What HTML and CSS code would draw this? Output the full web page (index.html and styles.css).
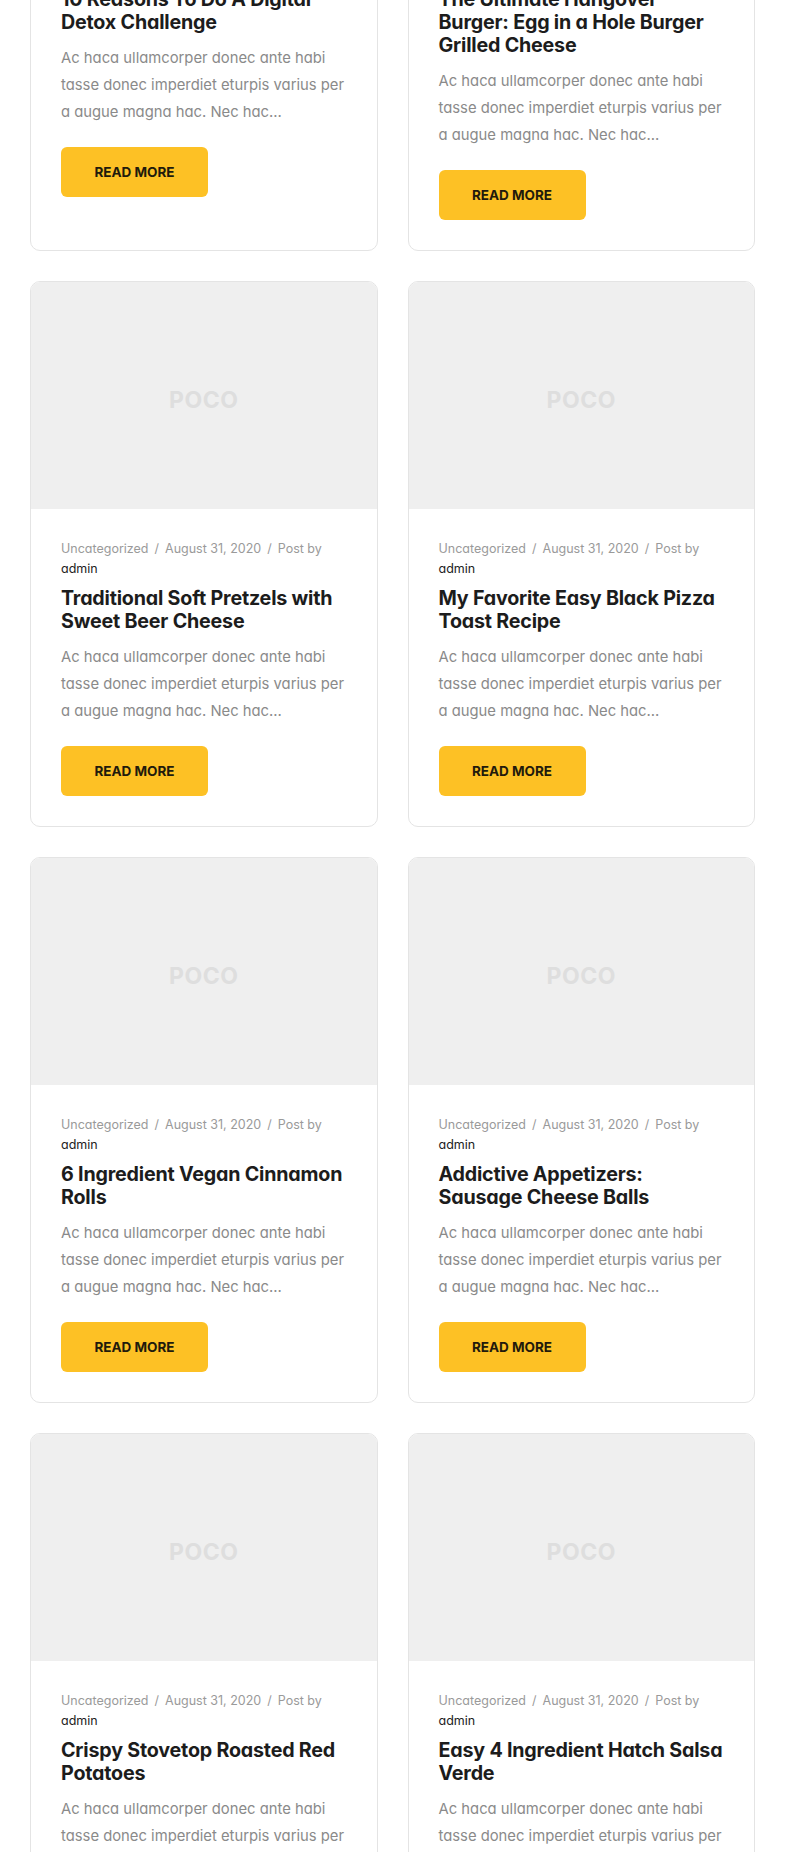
FILE: index.html
```html
<!DOCTYPE html>
<html lang="en">
<head>
<meta charset="utf-8">
<title>Blog</title>
<link rel="stylesheet" href="styles.css">
</head>
<body>
<main class="posts">
  <article class="card">
    <div class="thumb"><span class="logo">POCO</span></div>
    <div class="body">
      <div class="meta">Uncategorized<span class="sep">/</span>August 31, 2020<span class="sep">/</span>Post by <a class="author" href="#">admin</a></div>
      <h2 class="title">10 Reasons To Do A Digital Detox Challenge</h2>
      <p class="excerpt">Ac haca ullamcorper donec ante habi tasse donec imperdiet eturpis varius per a augue magna hac. Nec hac...</p>
      <a class="btn" href="#">READ MORE</a>
    </div>
  </article>
  <article class="card">
    <div class="thumb"><span class="logo">POCO</span></div>
    <div class="body">
      <div class="meta">Uncategorized<span class="sep">/</span>August 31, 2020<span class="sep">/</span>Post by <a class="author" href="#">admin</a></div>
      <h2 class="title">The Ultimate Hangover<br>Burger: Egg in a Hole Burger Grilled Cheese</h2>
      <p class="excerpt">Ac haca ullamcorper donec ante habi tasse donec imperdiet eturpis varius per a augue magna hac. Nec hac...</p>
      <a class="btn" href="#">READ MORE</a>
    </div>
  </article>
  <article class="card">
    <div class="thumb"><span class="logo">POCO</span></div>
    <div class="body">
      <div class="meta">Uncategorized<span class="sep">/</span>August 31, 2020<span class="sep">/</span>Post by <a class="author" href="#">admin</a></div>
      <h2 class="title">Traditional Soft Pretzels with Sweet Beer Cheese</h2>
      <p class="excerpt">Ac haca ullamcorper donec ante habi tasse donec imperdiet eturpis varius per a augue magna hac. Nec hac...</p>
      <a class="btn" href="#">READ MORE</a>
    </div>
  </article>
  <article class="card">
    <div class="thumb"><span class="logo">POCO</span></div>
    <div class="body">
      <div class="meta">Uncategorized<span class="sep">/</span>August 31, 2020<span class="sep">/</span>Post by <a class="author" href="#">admin</a></div>
      <h2 class="title">My Favorite Easy Black Pizza Toast Recipe</h2>
      <p class="excerpt">Ac haca ullamcorper donec ante habi tasse donec imperdiet eturpis varius per a augue magna hac. Nec hac...</p>
      <a class="btn" href="#">READ MORE</a>
    </div>
  </article>
  <article class="card">
    <div class="thumb"><span class="logo">POCO</span></div>
    <div class="body">
      <div class="meta">Uncategorized<span class="sep">/</span>August 31, 2020<span class="sep">/</span>Post by <a class="author" href="#">admin</a></div>
      <h2 class="title">6 Ingredient Vegan Cinnamon Rolls</h2>
      <p class="excerpt">Ac haca ullamcorper donec ante habi tasse donec imperdiet eturpis varius per a augue magna hac. Nec hac...</p>
      <a class="btn" href="#">READ MORE</a>
    </div>
  </article>
  <article class="card">
    <div class="thumb"><span class="logo">POCO</span></div>
    <div class="body">
      <div class="meta">Uncategorized<span class="sep">/</span>August 31, 2020<span class="sep">/</span>Post by <a class="author" href="#">admin</a></div>
      <h2 class="title">Addictive Appetizers: Sausage Cheese Balls</h2>
      <p class="excerpt">Ac haca ullamcorper donec ante habi tasse donec imperdiet eturpis varius per a augue magna hac. Nec hac...</p>
      <a class="btn" href="#">READ MORE</a>
    </div>
  </article>
  <article class="card">
    <div class="thumb"><span class="logo">POCO</span></div>
    <div class="body">
      <div class="meta">Uncategorized<span class="sep">/</span>August 31, 2020<span class="sep">/</span>Post by <a class="author" href="#">admin</a></div>
      <h2 class="title">Crispy Stovetop Roasted Red Potatoes</h2>
      <p class="excerpt">Ac haca ullamcorper donec ante habi tasse donec imperdiet eturpis varius per a augue magna hac. Nec hac...</p>
      <a class="btn" href="#">READ MORE</a>
    </div>
  </article>
  <article class="card">
    <div class="thumb"><span class="logo">POCO</span></div>
    <div class="body">
      <div class="meta">Uncategorized<span class="sep">/</span>August 31, 2020<span class="sep">/</span>Post by <a class="author" href="#">admin</a></div>
      <h2 class="title">Easy 4 Ingredient Hatch Salsa Verde</h2>
      <p class="excerpt">Ac haca ullamcorper donec ante habi tasse donec imperdiet eturpis varius per a augue magna hac. Nec hac...</p>
      <a class="btn" href="#">READ MORE</a>
    </div>
  </article>
</main>
</body>
</html>
```
FILE: styles.css
```css
* { box-sizing: border-box; }

html, body {
  margin: 0;
  padding: 0;
  background: #ffffff;
}

body {
  font-family: "Inter", "Roboto", "Liberation Sans", sans-serif;
  font-feature-settings: "cv11" 1;
  color: #1c1c1c;
  overflow: hidden;
}

.posts {
  display: grid;
  grid-template-columns: 1fr 1fr;
  column-gap: 30px;
  row-gap: 30px;
  padding: 0 30px;
  margin-top: -318px;
}

.card {
  border: 1px solid #e4e4e4;
  border-radius: 10px;
  overflow: hidden;
  background: #ffffff;
  display: flex;
  flex-direction: column;
}

.thumb {
  height: 227px;
  background: #efefef;
  display: flex;
  align-items: center;
  justify-content: center;
}

.logo {
  font-size: 23px;
  font-weight: 700;
  color: #dedede;
  letter-spacing: 0.5px;
  padding-top: 8px;
}

.body {
  padding: 30px 30px 30px;
  display: flex;
  flex-direction: column;
  align-items: flex-start;
}

.meta {
  font-size: 12.5px;
  line-height: 20px;
  color: #9a9a9a;
}

.sep {
  margin: 0 6px;
}

.author {
  color: #222222;
  text-decoration: none;
}

.title {
  margin: 8px 0 0;
  font-size: 19.7px;
  line-height: 23px;
  font-weight: 700;
  color: #1c1c1c;
  letter-spacing: -0.2px;
}

.excerpt {
  margin: 11px 0 0;
  font-size: 14.8px;
  line-height: 27px;
  color: #8a8a8a;
}

.btn {
  margin-top: 21px;
  height: 50px;
  width: 147px;
  display: flex;
  align-items: center;
  justify-content: center;
  background: #fdc125;
  border-radius: 6px;
  color: #221a0c;
  font-size: 13.5px;
  font-weight: 700;
  text-decoration: none;
}
```
